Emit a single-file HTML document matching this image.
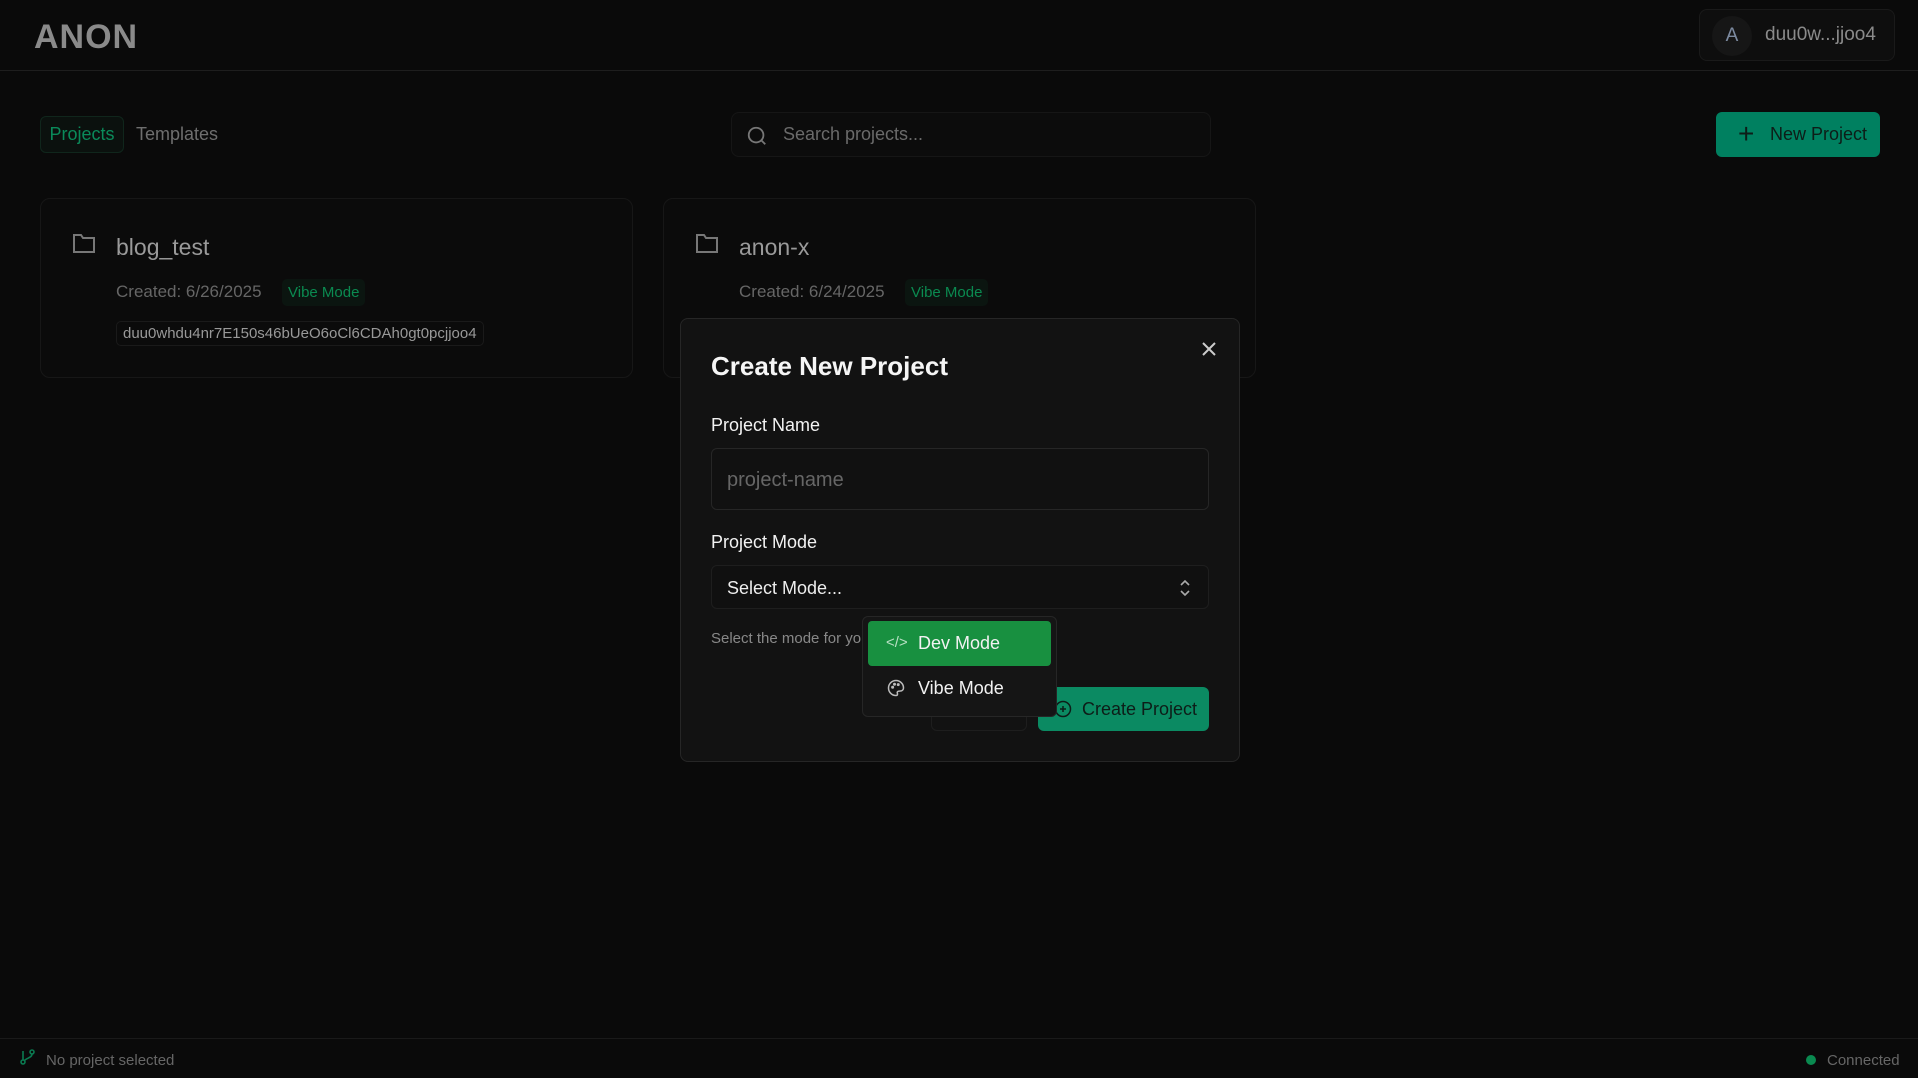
<!DOCTYPE html>
<html><head><meta charset="utf-8"><style>
*{box-sizing:border-box;margin:0;padding:0}
body{width:1918px;height:1078px;background:#0a0a0a;font-family:"Liberation Sans",sans-serif;position:relative;overflow:hidden;color:#888}
.a{position:absolute}
.hdr{left:0;top:0;width:1918px;height:71px;border-bottom:1px solid #1e1e1e}
.logo{left:34px;top:18px;font-size:34px;font-weight:900;color:#8a8a8a;letter-spacing:1px}
.user{left:1699px;top:9px;width:196px;height:52px;border:1px solid #1a1a1a;background:#0e0e0e;border-radius:8px}
.av{left:12px;top:6px;width:40px;height:40px;border-radius:50%;background:#161616;color:#7c8aa0;font-size:19px;text-align:center;line-height:40px}
.un{left:65px;top:14px;font-size:19px;color:#8a8a8a}
.tab1{left:40px;top:116px;width:84px;height:37px;border:1px solid #10261c;border-radius:6px;background:#0b110e;color:#0a8a5a;font-size:18px;text-align:center;line-height:35px}
.tab2{left:136px;top:124px;font-size:18px;color:#6e6e6e}
.search{left:731px;top:112px;width:480px;height:45px;border:1px solid #161616;border-radius:8px;background:#0c0c0c}
.newp{left:1716px;top:112px;width:164px;height:45px;background:#008060;border-radius:6px;color:#0d1d18;font-size:19px}
.card{top:198px;width:593px;height:180px;border:1px solid #171717;border-radius:10px;background:#0b0b0b}
.ct{left:75px;top:35px;font-size:23px;color:#9a9a9a}
.cd{left:75px;top:83px;font-size:17px;color:#666}
.vb{left:241px;top:80px;height:27px;padding:0 6px;background:#0b1510;border-radius:5px;color:#0a8a50;font-size:15px;line-height:27px}
.id{left:75px;top:122px;height:25px;padding:0 6px;border:1px solid #1a1a1a;border-radius:5px;font-size:15px;color:#999;line-height:23px}
.modal{left:680px;top:318px;width:560px;height:444px;background:#121212;border:1px solid #262626;border-radius:8px}
.lbl{color:#f2f2f2;font-size:18px}
.footer{left:0;top:1038px;width:1918px;height:40px;border-top:1px solid #1a1a1a}
</style></head><body>
<div class="a hdr"></div>
<div class="a logo">ANON</div>
<div class="a user"><div class="a av">A</div><div class="a un">duu0w...jjoo4</div></div>
<div class="a tab1">Projects</div>
<div class="a tab2">Templates</div>
<div class="a search">
<svg class="a" style="left:14px;top:12px" width="22" height="22" viewBox="0 0 24 24" fill="none" stroke="#777" stroke-width="2"><circle cx="11" cy="11" r="8"/><path d="M21 21l-4.3-4.3"/></svg>
<div class="a" style="left:51px;top:11px;font-size:18px;color:#6a6a6a">Search projects...</div></div>
<div class="a newp"><div class="a" style="left:22px;top:6px;font-size:28px;font-weight:300">+</div><div class="a" style="left:54px;top:12px;font-size:18px">New Project</div></div>

<div class="a card" style="left:40px">
<svg class="a" style="left:31px;top:33px" width="24" height="22" viewBox="0 0 24 22" fill="none" stroke="#777" stroke-width="2"><path d="M2 3h7l2 3h11v14H2z"/></svg>
<div class="a ct">blog_test</div><div class="a cd">Created: 6/26/2025</div><div class="a vb">Vibe Mode</div>
<div class="a id">duu0whdu4nr7E150s46bUeO6oCl6CDAh0gt0pcjjoo4</div></div>
<div class="a card" style="left:663px">
<svg class="a" style="left:31px;top:33px" width="24" height="22" viewBox="0 0 24 22" fill="none" stroke="#777" stroke-width="2"><path d="M2 3h7l2 3h11v14H2z"/></svg>
<div class="a ct">anon-x</div><div class="a cd">Created: 6/24/2025</div><div class="a vb">Vibe Mode</div></div>

<div class="a modal">
<div class="a" style="left:30px;top:32px;font-size:26px;font-weight:bold;color:#f5f5f5">Create New Project</div>
<svg class="a" style="left:520px;top:22px" width="16" height="16" viewBox="0 0 16 16" stroke="#ccc" stroke-width="2"><path d="M2 2l12 12M14 2L2 14"/></svg>
<div class="a lbl" style="left:30px;top:96px">Project Name</div>
<div class="a" style="left:30px;top:129px;width:498px;height:62px;border:1px solid #262626;border-radius:6px;background:#111"><div class="a" style="left:15px;top:20px;font-size:20px;color:#666">project-name</div></div>
<div class="a lbl" style="left:30px;top:213px">Project Mode</div>
<div class="a" style="left:30px;top:246px;width:498px;height:44px;border:1px solid #1e1e1e;border-radius:6px;background:#101010"><div class="a" style="left:15px;top:12px;font-size:18px;color:#eee">Select Mode...</div>
<svg class="a" style="left:466px;top:13px" width="14" height="18" viewBox="0 0 14 18" fill="none" stroke="#aaa" stroke-width="1.6"><path d="M3 6l4-4 4 4M3 12l4 4 4-4"/></svg></div>
<div class="a" style="left:30px;top:311px;font-size:15px;color:#888">Select the mode for yo</div>
<div class="a" style="left:250px;top:368px;width:96px;height:44px;border:1px solid #1e1e1e;border-radius:6px"></div>
<div class="a" style="left:357px;top:368px;width:171px;height:44px;background:#0b8a62;border-radius:6px">
<svg class="a" style="left:16px;top:13px" width="18" height="18" viewBox="0 0 24 24" fill="none" stroke="#0d1d18" stroke-width="2"><circle cx="12" cy="12" r="10"/><path d="M12 8v8M8 12h8"/></svg>
<div class="a" style="left:44px;top:12px;font-size:18px;color:#0d1d18">Create Project</div></div>
</div>

<div class="a" style="left:862px;top:616px;width:195px;height:101px;background:#151515;border:1px solid #262626;border-radius:6px">
<div class="a" style="left:5px;top:4px;width:183px;height:45px;background:#189040;border-radius:4px">
<div class="a" style="left:18px;top:13px;font-size:15px;color:#b8e0c4">&lt;/&gt;</div>
<div class="a" style="left:50px;top:12px;font-size:18px;color:#f2f2f2">Dev Mode</div></div>
<svg class="a" style="left:24px;top:62px" width="18" height="18" viewBox="0 0 24 24" fill="none" stroke="#bbb" stroke-width="2"><path d="M12 2a10 10 0 1 0 0 20c1.5 0 2-1 2-2 0-1.5-1-2 0-3s2-1 4-1a4 4 0 0 0 4-4A10 10 0 0 0 12 2z"/><circle cx="7.5" cy="11" r="1"/><circle cx="10" cy="7" r="1"/><circle cx="15" cy="7.5" r="1"/></svg>
<div class="a" style="left:55px;top:61px;font-size:18px;color:#f2f2f2">Vibe Mode</div></div>

<div class="a footer">
<svg class="a" style="left:20px;top:10px" width="16" height="16" viewBox="0 0 16 16" fill="none" stroke="#0a7a50" stroke-width="1.6"><circle cx="3" cy="13" r="2"/><circle cx="12" cy="3" r="2"/><path d="M3 11V2M12 5c0 4-6 4-8 7"/></svg>
<div class="a" style="left:46px;top:13px;font-size:15px;color:#666">No project selected</div>
<div class="a" style="left:1806px;top:16px;width:10px;height:10px;border-radius:50%;background:#0a8a50"></div>
<div class="a" style="left:1827px;top:13px;font-size:15px;color:#666">Connected</div></div>
</body></html>
